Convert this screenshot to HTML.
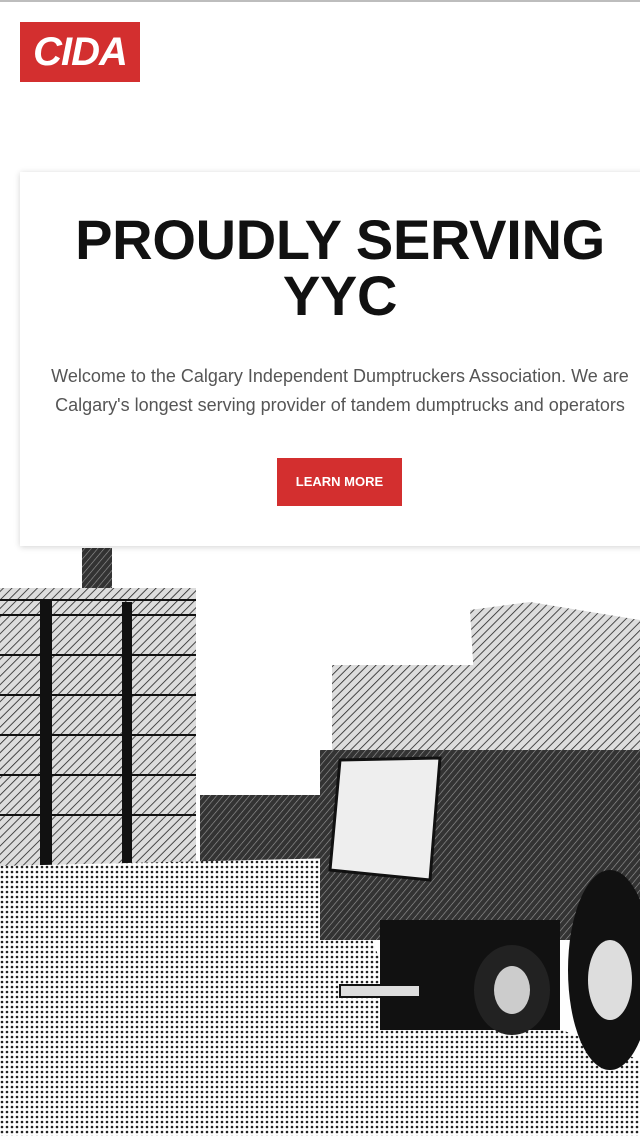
<!DOCTYPE html>
<html><head><meta charset="utf-8"><style>
*{margin:0;padding:0;box-sizing:border-box}
html,body{width:640px;height:1136px;overflow:hidden;background:#fff;font-family:"Liberation Sans",sans-serif}
.top{position:absolute;left:0;top:0;width:640px;height:2px;background:#bdbdbd}
.logo{position:absolute;left:20px;top:22px;width:120px;height:60px;background:#d32f2f;color:#fff;font:italic bold 40px/60px "Liberation Sans",sans-serif;text-align:center;letter-spacing:-1px}
.art{position:absolute;left:0;top:540px}
.card{position:absolute;left:20px;top:172px;width:640px;height:374px;background:#fff;box-shadow:0 1px 6px rgba(0,0,0,.18);text-align:center}
h1{position:absolute;left:20px;width:640px;top:212px;font-size:56px;line-height:56px;font-weight:bold;color:#111;text-align:center;letter-spacing:-0.3px}
p{position:absolute;left:0;width:680px;top:362px;font-size:18px;line-height:29px;color:#555;text-align:center}
.btn{position:absolute;left:277px;top:458px;width:125px;height:48px;background:#d32f2f;color:#fff;font-weight:bold;font-size:13px;line-height:48px;text-align:center}
</style></head><body>
<div class="top"></div>
<div class="logo">CIDA</div>
<svg class="art" width="640" height="596" viewBox="0 0 640 596">
<defs>
<pattern id="h" width="6" height="6" patternUnits="userSpaceOnUse" patternTransform="rotate(45)"><rect width="6" height="6" fill="#ddd"/><line x1="0" y1="0" x2="0" y2="6" stroke="#222" stroke-width="1.6"/></pattern>
<pattern id="g" width="5" height="5" patternUnits="userSpaceOnUse"><rect width="5" height="5" fill="#fff"/><circle cx="2" cy="2" r="1.3" fill="#222"/></pattern>
<pattern id="d" width="5" height="5" patternUnits="userSpaceOnUse" patternTransform="rotate(40)"><rect width="5" height="5" fill="#333"/><line x1="0" y1="0" x2="0" y2="5" stroke="#999" stroke-width="1.2"/></pattern>
</defs>
<rect x="0" y="48" width="196" height="278" fill="url(#h)"/>
<g stroke="#111" stroke-width="2" fill="none">
<line x1="0" y1="60" x2="196" y2="60"/><line x1="0" y1="75" x2="196" y2="75"/><line x1="0" y1="115" x2="196" y2="115"/><line x1="0" y1="155" x2="196" y2="155"/><line x1="0" y1="195" x2="196" y2="195"/><line x1="0" y1="235" x2="196" y2="235"/><line x1="0" y1="275" x2="196" y2="275"/></g>
<rect x="40" y="60" width="12" height="266" fill="#111"/><rect x="122" y="62" width="10" height="264" fill="#111"/>
<rect x="82" y="8" width="30" height="40" fill="url(#d)"/>
<rect x="200" y="255" width="150" height="70" fill="url(#d)"/>
<rect x="332" y="125" width="150" height="130" fill="url(#h)"/>
<path d="M0 326 L340 318 L380 420 L640 520 L640 596 L0 596Z" fill="url(#g)"/>
<path d="M470 70 L530 62 L640 80 L640 230 L480 240 Z" fill="url(#h)"/>
<rect x="320" y="210" width="320" height="190" fill="url(#d)"/>
<path d="M340 220 L440 218 L430 340 L330 330 Z" fill="#eee" stroke="#111" stroke-width="3"/>
<rect x="380" y="380" width="180" height="110" fill="#111"/>
<ellipse cx="512" cy="450" rx="38" ry="45" fill="#222"/><ellipse cx="512" cy="450" rx="18" ry="24" fill="#ccc"/>
<ellipse cx="610" cy="430" rx="42" ry="100" fill="#111"/><ellipse cx="610" cy="440" rx="22" ry="40" fill="#ddd"/>
<rect x="340" y="445" width="80" height="12" fill="#ddd" stroke="#111" stroke-width="2"/>
</svg>
<div class="card"></div>
<h1>PROUDLY SERVING<br>YYC</h1>
<p>Welcome to the Calgary Independent Dumptruckers Association. We are<br>Calgary's longest serving provider of tandem dumptrucks and operators</p>
<div class="btn">LEARN MORE</div>
</body></html>
